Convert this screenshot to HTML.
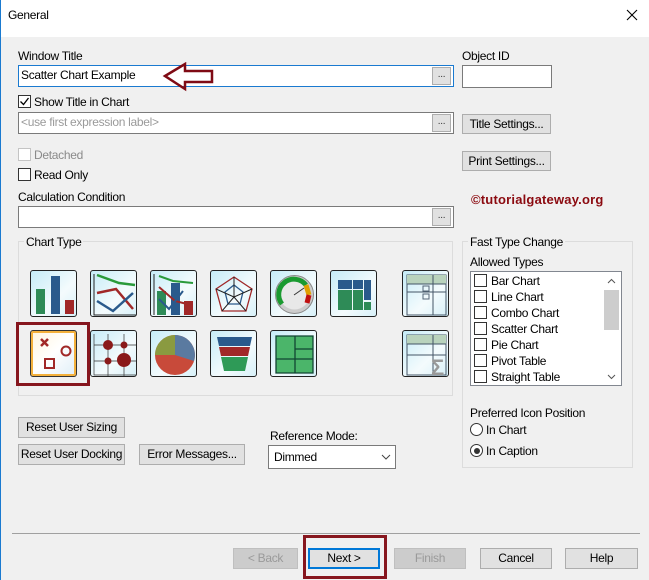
<!DOCTYPE html>
<html><head><meta charset="utf-8"><style>
*{box-sizing:border-box;margin:0;padding:0}
body{width:649px;height:580px;background:#f0f0f0;font-family:"Liberation Sans",sans-serif;font-size:12px;color:#000;position:relative;overflow:hidden;letter-spacing:-0.3px}
.a{position:absolute;white-space:nowrap}
.inp{position:absolute;background:#fff;border:1px solid #7a7a7a}
.dot{position:absolute;width:19px;height:18px;border:1px solid #adadad;background:#e1e1e1;font-size:10px;text-align:center;line-height:14px;color:#333}
.btn{position:absolute;background:#e1e1e1;border:1px solid #adadad;text-align:center;line-height:18px}
.cb{position:absolute;width:13px;height:13px;border:1px solid #333;background:#fff}
.grp{position:absolute;border:1px solid #dcdcdc}
.ic{position:absolute;width:47px;height:47px;border:1px solid #222;border-radius:3px;background:linear-gradient(135deg,#c6ecf7,#f4fbfd 60%,#d7f0f8);overflow:hidden}
.ic svg{position:absolute;left:0;top:0}
</style></head><body>
<div class="a" style="left:0;top:0;width:649px;height:37px;background:#fff"></div>
<div class="a" style="left:0;top:0;width:1px;height:580px;background:#1a7ad0"></div>
<div class="a" style="left:8px;top:8px">General</div>
<svg class="a" style="left:626px;top:9px" width="12" height="12"><path d="M1 1L11 11M11 1L1 11" stroke="#000" stroke-width="1.1"/></svg>

<div class="a" style="left:18px;top:49px">Window Title</div>
<div class="inp" style="left:18px;top:65px;width:436px;height:22px;border-color:#1a7ad0"></div>
<div class="a" style="left:21px;top:68px">Scatter Chart Example</div>
<div class="dot" style="left:432px;top:67px">...</div>
<svg class="a" style="left:160px;top:62px" width="60" height="30"><path d="M5 14L25 2V9H52V20H25V27Z" fill="none" stroke="#7f0a14" stroke-width="2.5"/></svg>
<div class="a" style="left:462px;top:49px">Object ID</div>
<div class="inp" style="left:462px;top:65px;width:90px;height:23px"></div>

<div class="cb" style="left:18px;top:95px"></div>
<svg class="a" style="left:19px;top:96px" width="11" height="11"><path d="M1.5 5.5L4.5 8.5L9.5 2" fill="none" stroke="#000" stroke-width="1.3"/></svg>
<div class="a" style="left:34px;top:95px">Show Title in Chart</div>
<div class="inp" style="left:18px;top:112px;width:436px;height:22px"></div>
<div class="a" style="left:21px;top:115px;color:#9a9a9a">&lt;use first expression label&gt;</div>
<div class="dot" style="left:432px;top:114px">...</div>
<div class="btn" style="left:462px;top:114px;width:89px;height:20px">Title Settings...</div>

<div class="cb" style="left:18px;top:148px;border-color:#c4c4c4"></div>
<div class="a" style="left:34px;top:148px;color:#8a8a8a">Detached</div>
<div class="cb" style="left:18px;top:168px"></div>
<div class="a" style="left:34px;top:168px">Read Only</div>
<div class="btn" style="left:462px;top:151px;width:89px;height:20px">Print Settings...</div>
<div class="a" style="left:471px;top:192px;color:#8b0a10;font-weight:bold;font-size:13px;letter-spacing:0.2px">©tutorialgateway.org</div>

<div class="a" style="left:18px;top:190px">Calculation Condition</div>
<div class="inp" style="left:18px;top:206px;width:436px;height:22px"></div>
<div class="dot" style="left:432px;top:208px">...</div>

<div class="grp" style="left:18px;top:241px;width:435px;height:155px"></div>
<div class="a" style="left:24px;top:235px;background:#f0f0f0;padding:0 2px">Chart Type</div>

<div class="ic" style="left:30px;top:270px"><svg width="47" height="47"><rect x="5" y="18" width="9" height="25" fill="#2e8b57"/><rect x="20" y="5" width="9" height="38" fill="#2a5a8c"/><rect x="34" y="29" width="9" height="14" fill="#a12828"/></svg></div>
<div class="ic" style="left:90px;top:270px"><svg width="47" height="47"><path d="M3 3V44H46" stroke="#222" fill="none"/><path d="M6 4L28 12L44 14" stroke="#2a9a3a" stroke-width="2.5" fill="none"/><path d="M6 22L25 18L42 38" stroke="#a12828" stroke-width="2.5" fill="none"/><path d="M6 30L22 40L42 22" stroke="#2a5a8c" stroke-width="2.5" fill="none"/></svg></div>
<div class="ic" style="left:150px;top:270px"><svg width="47" height="47"><rect x="6" y="20" width="9" height="24" fill="#2e8b57"/><rect x="20" y="12" width="9" height="32" fill="#2a5a8c"/><rect x="33" y="30" width="9" height="14" fill="#a12828"/><path d="M3 3V44" stroke="#222"/><path d="M8 5L22 10L42 12" stroke="#2a9a3a" stroke-width="2" fill="none"/><path d="M8 16L24 30L40 34" stroke="#a12828" stroke-width="2" fill="none"/><path d="M8 28L18 38L32 20" stroke="#2a5a8c" stroke-width="2" fill="none"/></svg></div>
<div class="ic" style="left:210px;top:270px"><svg width="47" height="47"><path d="M23 6L41 18L35 40H11L5 18Z" stroke="#a12828" fill="none" stroke-width="1.3"/><path d="M23 14L32 21L29 33H17L14 21Z" stroke="#2a5a8c" fill="none" stroke-width="1.3"/><path d="M23 6V26M41 18L23 26M35 40L23 26M11 40L23 26M5 18L23 26" stroke="#222"/></svg></div>
<div class="ic" style="left:270px;top:270px"><svg width="47" height="47"><circle cx="23.5" cy="23.5" r="19" fill="#ccc" stroke="#888"/><circle cx="23.5" cy="23.5" r="15" fill="#e8e8e8"/><path d="M11 33A15 15 0 0 1 35 14" stroke="#1a9a30" stroke-width="5" fill="none"/><path d="M35 14L38 24" stroke="#e0a000" stroke-width="5"/><path d="M38 24L36 32" stroke="#c01010" stroke-width="5"/><path d="M23 24L33 17" stroke="#333"/></svg></div>
<div class="ic" style="left:330px;top:270px"><svg width="47" height="47"><rect x="7" y="9" width="14" height="9" fill="#2a5a8c"/><rect x="22" y="9" width="10" height="9" fill="#2a5a8c"/><rect x="33" y="9" width="7" height="20" fill="#2a5a8c"/><rect x="7" y="19" width="14" height="20" fill="#2e8b57"/><rect x="22" y="19" width="10" height="20" fill="#2e8b57"/><rect x="33" y="31" width="7" height="8" fill="#2e8b57"/></svg></div>
<div class="ic" style="left:402px;top:270px"><svg width="47" height="47"><rect x="4" y="4" width="39" height="40" fill="none" stroke="#456"/><rect x="4" y="4" width="39" height="9" fill="#b9d3bd"/><path d="M4 13H43M4 21H43M30 4V44" stroke="#456"/><rect x="20" y="15" width="6" height="5" fill="none" stroke="#567"/><rect x="20" y="23" width="6" height="5" fill="none" stroke="#567"/></svg></div>

<div class="ic" style="left:30px;top:330px;border-color:#333;background:linear-gradient(135deg,#fff5dc,#fff 50%,#dfeef8);box-shadow:inset 0 0 0 2px #f4b13c"><svg width="47" height="47"><path d="M10 8L17 15M17 8L10 15" stroke="#a12828" stroke-width="2.5"/><circle cx="35" cy="20" r="4.5" stroke="#a12828" stroke-width="2" fill="none"/><rect x="14" y="28" width="9" height="9" stroke="#a12828" stroke-width="2" fill="none"/></svg></div>
<div class="a" style="left:16px;top:322px;width:74px;height:64px;border:3px solid #86161e"></div>
<div class="ic" style="left:90px;top:330px"><svg width="47" height="47"><path d="M3 3V44H46M3 14H46M3 30H46M17 3V46M33 3V46" stroke="#333" stroke-width="0.7" fill="none"/><circle cx="17" cy="14" r="5" fill="#8a1a1a"/><circle cx="33" cy="14" r="3.5" fill="#8a1a1a"/><circle cx="17" cy="30" r="3.5" fill="#8a1a1a"/><circle cx="33" cy="29" r="7" fill="#8a1a1a"/></svg></div>
<div class="ic" style="left:150px;top:330px"><svg width="47" height="47"><circle cx="24" cy="24" r="20" fill="#c84a3a"/><path d="M24 24L24 4A20 20 0 0 1 43 30Z" fill="#5a7aa0"/><path d="M24 24L4 24A20 20 0 0 1 24 4Z" fill="#8a9a40"/></svg></div>
<div class="ic" style="left:210px;top:330px"><svg width="47" height="47"><path d="M6 6H41L39 15H8Z" fill="#2a5a8c"/><path d="M8 16H39L37 25H10Z" fill="#a12828"/><path d="M10 26H37L34 40H13Z" fill="#2e9a57"/></svg></div>
<div class="ic" style="left:270px;top:330px"><svg width="47" height="47"><rect x="5" y="5" width="37" height="37" fill="#4bb56a"/><path d="M5 5H42V42H5ZM5 28H42M24 5V42M24 18H42" stroke="#143" stroke-width="1.3" fill="none"/></svg></div>
<div class="ic" style="left:402px;top:330px"><svg width="47" height="47"><rect x="4" y="4" width="39" height="40" fill="none" stroke="#456"/><rect x="4" y="4" width="39" height="9" fill="#b9d3bd"/><path d="M4 13H43M4 24H43M30 4V44" stroke="#456"/><text x="28" y="44" font-size="22" font-weight="bold" fill="#999" font-family="Liberation Sans">Σ</text></svg></div>

<div class="grp" style="left:462px;top:241px;width:171px;height:227px"></div>
<div class="a" style="left:468px;top:235px;background:#f0f0f0;padding:0 2px">Fast Type Change</div>
<div class="a" style="left:470px;top:255px">Allowed Types</div>
<div class="inp" style="left:470px;top:271px;width:152px;height:115px;border-color:#828790"></div>
<div class="a" style="left:604px;top:290px;width:15px;height:40px;background:#cdcdcd"></div>
<svg class="a" style="left:607px;top:278px" width="9" height="6"><path d="M1 5L4.5 1.5L8 5" stroke="#555" fill="none"/></svg>
<svg class="a" style="left:607px;top:374px" width="9" height="6"><path d="M1 1L4.5 4.5L8 1" stroke="#555" fill="none"/></svg>
<div class="cb" style="left:474px;top:274px"></div><div class="a" style="left:491px;top:274px">Bar Chart</div>
<div class="cb" style="left:474px;top:290px"></div><div class="a" style="left:491px;top:290px">Line Chart</div>
<div class="cb" style="left:474px;top:306px"></div><div class="a" style="left:491px;top:306px">Combo Chart</div>
<div class="cb" style="left:474px;top:322px"></div><div class="a" style="left:491px;top:322px">Scatter Chart</div>
<div class="cb" style="left:474px;top:338px"></div><div class="a" style="left:491px;top:338px">Pie Chart</div>
<div class="cb" style="left:474px;top:354px"></div><div class="a" style="left:491px;top:354px">Pivot Table</div>
<div class="cb" style="left:474px;top:370px"></div><div class="a" style="left:491px;top:370px">Straight Table</div>
<div class="a" style="left:470px;top:406px">Preferred Icon Position</div>
<div class="a" style="left:470px;top:423px;width:13px;height:13px;border:1px solid #333;border-radius:50%;background:#fff"></div>
<div class="a" style="left:486px;top:423px">In Chart</div>
<div class="a" style="left:470px;top:444px;width:13px;height:13px;border:1px solid #333;border-radius:50%;background:#fff"></div>
<div class="a" style="left:473.5px;top:447.5px;width:6px;height:6px;border-radius:50%;background:#333"></div>
<div class="a" style="left:486px;top:444px">In Caption</div>

<div class="btn" style="left:18px;top:417px;width:107px;height:21px">Reset User Sizing</div>
<div class="btn" style="left:18px;top:444px;width:107px;height:21px">Reset User Docking</div>
<div class="btn" style="left:139px;top:444px;width:106px;height:21px">Error Messages...</div>
<div class="a" style="left:270px;top:429px">Reference Mode:</div>
<div class="inp" style="left:268px;top:445px;width:128px;height:24px"></div>
<div class="a" style="left:274px;top:450px">Dimmed</div>
<svg class="a" style="left:381px;top:454px" width="10" height="6"><path d="M1 1L5 5L9 1" stroke="#444" fill="none"/></svg>

<div class="a" style="left:12px;top:533px;width:628px;height:1px;background:#a0a0a0"></div>
<div class="btn" style="left:233px;top:548px;width:65px;height:21px;color:#9a9a9a;background:#ccc;border-color:#bfbfbf">&lt; Back</div>
<div class="btn" style="left:308px;top:548px;width:72px;height:21px;border:2px solid #0078d7;line-height:17px">Next &gt;</div>
<div class="a" style="left:303px;top:535px;width:84px;height:44px;border:3px solid #86161e"></div>
<div class="btn" style="left:394px;top:548px;width:72px;height:21px;color:#9a9a9a;background:#ccc;border-color:#bfbfbf">Finish</div>
<div class="btn" style="left:480px;top:548px;width:72px;height:21px">Cancel</div>
<div class="btn" style="left:565px;top:548px;width:73px;height:21px">Help</div>
</body></html>
